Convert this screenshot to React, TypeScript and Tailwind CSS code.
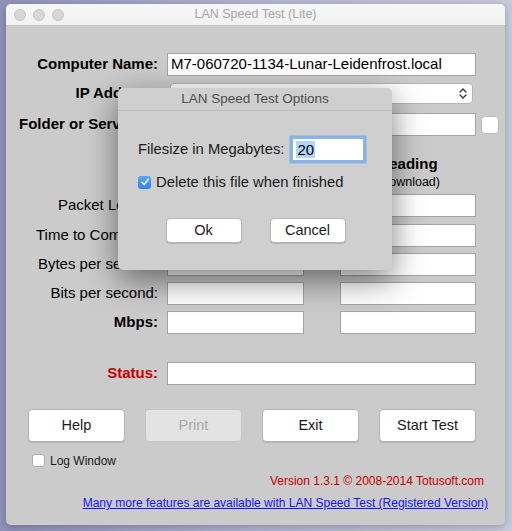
import React from "react";

const font = { fontFamily: '"Liberation Sans", Arial, sans-serif' };

const TextBox = ({ w, value = "" }: { w: string; value?: string }) => (
  <div
    className={`${w} h-[23px] bg-white border border-[#a4a4a4] flex items-center px-[3px] text-[15px] text-black whitespace-nowrap overflow-hidden`}>
    {value}
  </div>
);

const MacButton = ({
  label,
  disabled = false,
  className = "",
}: {
  label: string;
  disabled?: boolean;
  className?: string;
}) => (
  <div
    className={`flex items-center justify-center rounded-[4px] border text-[14.5px] ${
      disabled
        ? "bg-[#e3e3e3] border-[#c6c6c6] text-[#a9a9a9]"
        : "bg-white border-[#b4b4b4] text-[#1a1a1a] shadow-[0_1px_0_rgba(0,0,0,0.12)]"
    } ${className}`}>
    {label}
  </div>
);

const DataRow = ({
  label,
  bold = false,
  className = "",
}: {
  label: string;
  bold?: boolean;
  className?: string;
}) => (
  <div className={`flex items-center h-[23px] ${className}`}>
    <div
      className={`w-[152px] text-right text-[15px] text-black ${
        bold ? "font-bold" : ""
      }`}>
      {label}
    </div>
    <div className="ml-[9px]">
      <TextBox w="w-[137px]" />
    </div>
    <div className="ml-[36px]">
      <TextBox w="w-[136px]" />
    </div>
  </div>
);

export default function App() {
  return (
    <div
      style={font}
      className="relative w-[512px] h-[531px] overflow-hidden bg-gradient-to-r from-[#9092ba] via-[#b4b5d2] to-[#c9cadc] pt-[4px] pl-[6px]">
      {/* main window */}
      <div className="w-[499px] h-[521px] rounded-[5px] bg-[#cbcbcb] overflow-hidden shadow-[0_2px_8px_rgba(0,0,0,0.25)] flex flex-col">
        {/* title bar */}
        <div className="relative h-[22px] bg-gradient-to-b from-[#f7f7f7] to-[#f1f1f1] border-b border-[#c3c3c3] flex items-center">
          <div className="flex gap-[7px] pl-[8px]">
            <span className="w-[12px] h-[12px] rounded-full bg-[#d7d7d7] border border-[#c6c6c6]" />
            <span className="w-[12px] h-[12px] rounded-full bg-[#d7d7d7] border border-[#c6c6c6]" />
            <span className="w-[12px] h-[12px] rounded-full bg-[#d7d7d7] border border-[#c6c6c6]" />
          </div>
          <div className="absolute inset-0 flex items-center justify-center text-[12.5px] text-[#a6a6a6]">
            LAN Speed Test (Lite)
          </div>
        </div>

        {/* body */}
        <div className="flex flex-col">
          <div className="flex items-center h-[23px] mt-[27px]">
            <div className="w-[152px] text-right text-[15px] font-bold text-black">
              Computer Name:
            </div>
            <div className="ml-[9px]">
              <TextBox
                w="w-[309px]"
                value="M7-060720-1134-Lunar-Leidenfrost.local"
              />
            </div>
          </div>

          <div className="flex items-center h-[21px] mt-[7px]">
            <div className="w-[152px] text-right text-[15px] font-bold text-black">
              IP Address:
            </div>
            <div className="ml-[12px] w-[303px] h-[21px] bg-white border border-[#b6b6b6] rounded-[4px] flex items-center justify-between pl-[6px] pr-[5px] text-[15px] text-black">
              <span>10.0.0.150</span>
              <svg width="8" height="13" viewBox="0 0 8 13" fill="none">
                <path
                  d="M1 5 L4 2 L7 5 M1 8 L4 11 L7 8"
                  stroke="#333"
                  strokeWidth="1.3"
                  strokeLinecap="round"
                  strokeLinejoin="round"
                />
              </svg>
            </div>
          </div>

          <div className="flex items-center h-[23px] mt-[9px]">
            <div className="w-[152px] pl-[13px] text-[15px] font-bold text-black whitespace-nowrap overflow-hidden">
              Folder or Server:
            </div>
            <div className="ml-[9px]">
              <TextBox w="w-[309px]" />
            </div>
            <div className="ml-[5px] w-[18px] h-[18px] bg-white rounded-[4px] border border-[#bcbcbc]" />
          </div>

          {/* column headings (left one sits under the sheet) */}
          <div className="flex mt-[19px]">
            <div className="w-[161px]" />
            <div className="w-[137px]" />
            <div className="ml-[36px] w-[136px] flex flex-col items-center">
              <span className="text-[15px] font-bold leading-[17px] text-black">
                Reading
              </span>
              <span className="text-[12.5px] leading-[15px] mt-[3px] text-black">
                (Download)
              </span>
            </div>
          </div>

          <DataRow label="Packet Length:" className="mt-[4px]" />
          <DataRow label="Time to Complete:" className="mt-[7px]" />
          <DataRow label="Bytes per second:" className="mt-[6px]" />
          <DataRow label="Bits per second:" className="mt-[6px]" />
          <DataRow label="Mbps:" bold className="mt-[6px]" />

          <div className="flex items-center h-[23px] mt-[28px]">
            <div className="w-[152px] text-right text-[15px] font-bold text-[#cc0000]">
              Status:
            </div>
            <div className="ml-[9px]">
              <TextBox w="w-[309px]" />
            </div>
          </div>

          {/* buttons */}
          <div className="flex gap-[20px] pl-[22px] mt-[24px]">
            <MacButton label="Help" className="w-[97px] h-[33px]" />
            <MacButton label="Print" disabled className="w-[97px] h-[33px]" />
            <MacButton label="Exit" className="w-[97px] h-[33px]" />
            <MacButton label="Start Test" className="w-[97px] h-[33px]" />
          </div>

          <div className="flex items-center gap-[5px] pl-[26px] mt-[12px] h-[13px]">
            <span className="w-[13px] h-[13px] bg-white rounded-[3px] border border-[#adadad]" />
            <span className="text-[12px] text-[#1a1a1a]">Log Window</span>
          </div>

          <div className="flex justify-end pr-[21px] mt-[6px] text-[12px] leading-[16px] text-[#c80000]">
            Version 1.3.1 © 2008-2014 Totusoft.com
          </div>
          <div className="flex justify-end pr-[17px] mt-[6px] text-[12px] leading-[16px] text-[#1515ff] underline">
            Many more features are available with LAN Speed Test (Registered
            Version)
          </div>
        </div>
      </div>

      {/* options sheet */}
      <div className="absolute left-[118px] top-[88px] w-[274px] h-[182px] rounded-[5px] bg-[#cfcfcf] shadow-[0_10px_32px_rgba(0,0,0,0.5)] flex flex-col overflow-hidden">
        <div className="h-[23px] flex items-center justify-center border-b border-[#bdbdbd] text-[13.5px] text-[#4d4d4d] pt-[1px]">
          LAN Speed Test Options
        </div>
        <div className="flex items-center mt-[27px] pl-[20px] h-[22px]">
          <span className="text-[14.8px] text-[#1a1a1a] whitespace-nowrap">
            Filesize in Megabytes:
          </span>
          <div className="ml-[8px] w-[72px] h-[23px] bg-white border border-[#8fb3e4] shadow-[0_0_0_2.5px_#86b2ea] flex items-center pl-[3px]">
            <span className="bg-[#b3d5fd] text-[15px] leading-[17px] text-black px-[1px]">
              20
            </span>
          </div>
        </div>
        <div className="flex items-center gap-[5px] mt-[15px] pl-[20px] h-[14px]">
          <span className="w-[13px] h-[13px] rounded-[3px] bg-gradient-to-b from-[#5aa6fb] to-[#2f82ee] flex items-center justify-center">
            <svg width="10" height="10" viewBox="0 0 10 10" fill="none">
              <path
                d="M2 5.2 L4.2 7.6 L8.2 2.2"
                stroke="white"
                strokeWidth="1.5"
                strokeLinecap="round"
                strokeLinejoin="round"
              />
            </svg>
          </span>
          <span className="text-[14.8px] text-[#1a1a1a] whitespace-nowrap">
            Delete this file when finished
          </span>
        </div>
        <div className="flex justify-center gap-[28px] mt-[29px] pl-[1px]">
          <MacButton label="Ok" className="w-[76px] h-[25px]" />
          <MacButton label="Cancel" className="w-[76px] h-[25px]" />
        </div>
      </div>
    </div>
  );
}
